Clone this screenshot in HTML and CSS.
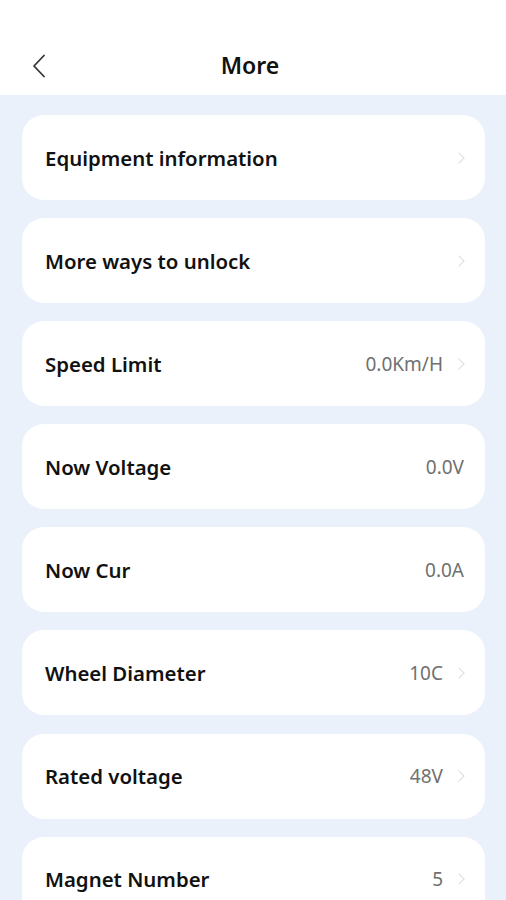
FILE: index.html
```html
<!DOCTYPE html>
<html lang="en">
<head>
    <meta charset="UTF-8">
    <title>More</title>
    <link rel="stylesheet" href="styles.css">
</head>
<body>
    <div class="header">
        <span class="back">
            <svg width="14" height="24" viewBox="0 0 14 24"><path d="M12 1.5 L2 12 L12 22.5" fill="none" stroke="#333" stroke-width="1.8" stroke-linecap="round" stroke-linejoin="round"/></svg>
        </span>
        <h1>More</h1>
    </div>
    <div class="list">
        <div class="item"><span class="name">Equipment information</span><span class="value"></span><span class="arrow"></span></div>
        <div class="item"><span class="name">More ways to unlock</span><span class="value"></span><span class="arrow"></span></div>
        <div class="item"><span class="name">Speed Limit</span><span class="value">0.0Km/H</span><span class="arrow"></span></div>
        <div class="item"><span class="name">Now Voltage</span><span class="value">0.0V</span></div>
        <div class="item"><span class="name">Now Cur</span><span class="value">0.0A</span></div>
        <div class="item"><span class="name">Wheel Diameter</span><span class="value">10C</span><span class="arrow"></span></div>
        <div class="item"><span class="name">Rated voltage</span><span class="value">48V</span><span class="arrow"></span></div>
        <div class="item"><span class="name">Magnet Number</span><span class="value">5</span><span class="arrow"></span></div>
    </div>
</body>
</html>
```

FILE: styles.css
```css
body { margin: 0; font-family: "Noto Sans", Roboto, sans-serif; background: #eaf1fb; height: 900px; overflow: hidden; }
.header {
    height: 95px;
    background: #fff;
    display: flex;
    align-items: center;
    justify-content: center;
    position: relative;
    padding: 34px 6px 0 0;
    box-sizing: border-box;
}
.header h1 { margin: 0; font-size: 23px; font-weight: 600; color: #111; }
.back { position: absolute; left: 32px; top: 54px; }
.list {
    display: flex;
    flex-direction: column;
    gap: 18.1px;
    padding: 20px 21px 0 22px;
}
.item {
    height: 85px;
    background: #fff;
    border-radius: 22px;
    display: flex;
    align-items: center;
    padding: 0 21px 0 23px;
}
.name { flex: 1; font-size: 20.4px; font-weight: 600; color: #111; }
.value { font-size: 19px; color: #707070; }
.arrow {
    width: 7px;
    height: 7px;
    border-top: 1.5px solid #ddd;
    border-right: 1.5px solid #ddd;
    transform: rotate(45deg);
    margin: 0 1px 0 12px;
}
```
